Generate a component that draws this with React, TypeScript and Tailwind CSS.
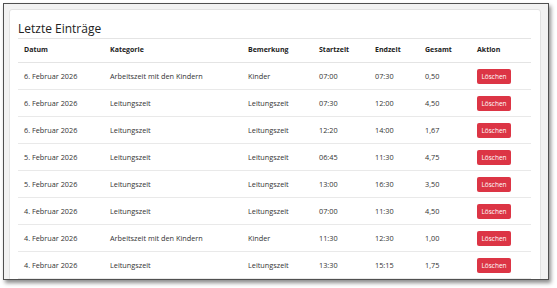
const rows = [
  ["6. Februar 2026", "Arbeitszeit mit den Kindern", "Kinder", "07:00", "07:30", "0,50"],
  ["6. Februar 2026", "Leitungszeit", "Leitungszeit", "07:30", "12:00", "4,50"],
  ["6. Februar 2026", "Leitungszeit", "Leitungszeit", "12:20", "14:00", "1,67"],
  ["5. Februar 2026", "Leitungszeit", "Leitungszeit", "06:45", "11:30", "4,75"],
  ["5. Februar 2026", "Leitungszeit", "Leitungszeit", "13:00", "16:30", "3,50"],
  ["4. Februar 2026", "Leitungszeit", "Leitungszeit", "07:00", "11:30", "4,50"],
  ["4. Februar 2026", "Arbeitszeit mit den Kindern", "Kinder", "11:30", "12:30", "1,00"],
  ["4. Februar 2026", "Leitungszeit", "Leitungszeit", "13:30", "15:15", "1,75"],
];

const headers = ["Datum", "Kategorie", "Bemerkung", "Startzeit", "Endzeit", "Gesamt", "Aktion"];

const cols = "grid grid-cols-[86px_138px_71px_56px_50px_52px_60px]";

export default function App() {
  return (
    <div className="w-[557px] h-[288px] bg-white pl-[3px] pt-[3px] font-['Open_Sans',sans-serif]">
      <div className="w-[546px] h-[277px] border border-[#505050] bg-[#f2f2f2] shadow-[2px_3px_4px_rgba(0,0,0,0.45)] overflow-hidden pl-[5px] pt-[5px]">
        <div className="w-[532px] h-[300px] bg-white border border-[#e2e2e2] rounded-[3px] px-[8px] pt-[11px]">
          <h2 className="text-[12px] leading-[16px] text-[#222] mb-[1px]">Letzte Einträge</h2>
          <div className="w-[513px]">
            <div className={`${cols} h-[25px] items-center border-t border-b border-[#e4e4e4] text-[7px] font-bold text-[#222]`}>
              {headers.map((h) => (
                <div key={h} className="pl-[6px]">{h}</div>
              ))}
            </div>
            {rows.map((r, i) => (
              <div key={i} className={`${cols} h-[27px] items-center border-b border-[#e9e9e9] text-[7.3px] text-[#333]`}>
                {r.map((c, j) => (
                  <div key={j} className="pl-[6px] whitespace-nowrap">{c}</div>
                ))}
                <div className="pl-[6px]">
                  <button className="w-[34px] h-[15px] rounded-[2px] bg-[#dc3545] text-white text-[6.5px] leading-[15px] text-center">
                    Löschen
                  </button>
                </div>
              </div>
            ))}
          </div>
        </div>
      </div>
    </div>
  );
}
